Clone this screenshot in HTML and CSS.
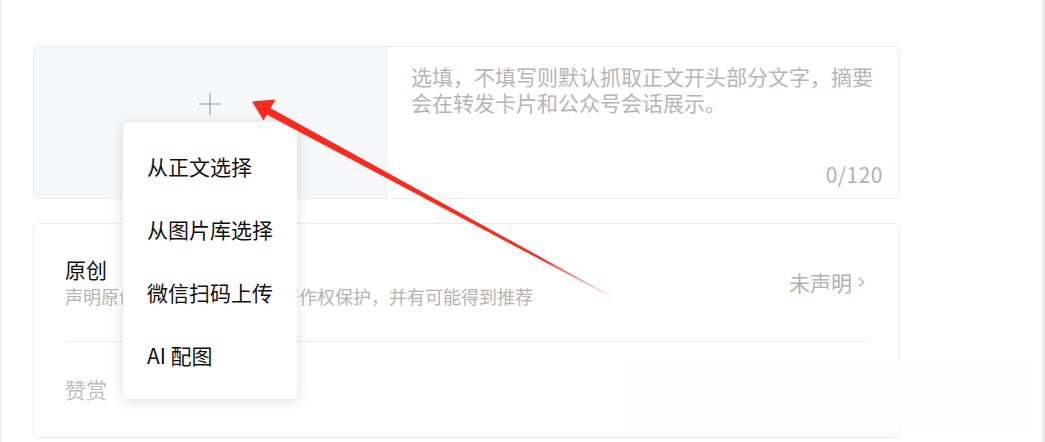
FILE: index.html
```html
<!DOCTYPE html>
<html lang="zh-CN">
<head>
<meta charset="utf-8">
<title>封面与摘要</title>
<link rel="stylesheet" href="styles.css">
</head>
<body>
<div class="page">
  <div class="edge edge-left"></div>
  <main class="content">
    <section class="cover-card">
      <div class="cover-pick">
        <svg class="plus" width="24" height="24" viewBox="0 0 24 24" aria-hidden="true">
          <path d="M12 1 V23 M1 12 H23" stroke="#b4b4b4" stroke-width="1.6" fill="none"/>
        </svg>
      </div>
      <div class="digest">
        <p class="digest-placeholder">选填，不填写则默认抓取正文开头部分文字，摘要会在转发卡片和公众号会话展示。</p>
        <div class="digest-count">0/120</div>
      </div>
    </section>

    <section class="settings-card">
      <div class="setting-row">
        <div class="setting-info">
          <div class="setting-title">原创</div>
          <div class="setting-desc">声明原创获得原创标识，受著作权保护，并有可能得到推荐</div>
        </div>
        <div class="setting-value">未声明
          <svg class="chevron" width="9" height="12" viewBox="0 0 9 12" aria-hidden="true">
            <path d="M2 1.5 L6.5 6 L2 10.5" stroke="#b4b4b4" stroke-width="1.3" fill="none"/>
          </svg>
        </div>
      </div>
      <div class="setting-row setting-row-last">
        <div class="setting-title setting-title-muted">赞赏</div>
      </div>
    </section>
  </main>
  <div class="edge edge-right"></div>

  <ul class="cover-menu">
    <li class="cover-menu-item">从正文选择</li>
    <li class="cover-menu-item">从图片库选择</li>
    <li class="cover-menu-item">微信扫码上传</li>
    <li class="cover-menu-item">AI 配图</li>
  </ul>

  <div class="ghost-panel"></div>

  <svg class="annotation-arrow" width="1045" height="442" viewBox="0 0 1045 442" aria-hidden="true">
    <defs>
      <linearGradient id="tailFade" gradientUnits="userSpaceOnUse" x1="540" y1="258" x2="614" y2="298">
        <stop offset="0" stop-color="#fb2a1c" stop-opacity="1"/>
        <stop offset="1" stop-color="#fb2a1c" stop-opacity="0.05"/>
      </linearGradient>
    </defs>
    <polygon points="266.2,114.2 269.8,107.8 612.3,296.6 611.8,297.5" fill="url(#tailFade)"/>
    <polygon points="252,101.5 275.5,99.5 263.5,120.5" fill="#fb2a1c"/>
  </svg>
</div>
</body>
</html>
```

FILE: styles.css
```css
* {
  box-sizing: border-box;
}

html, body {
  margin: 0;
  padding: 0;
  background: #ffffff;
}

body {
  font-family: "Noto Sans CJK SC", "Liberation Sans", sans-serif;
  color: #1f1f1f;
}

.page {
  position: relative;
  width: 1045px;
  height: 442px;
  overflow: hidden;
  display: flex;
}

.edge {
  flex: none;
  background: #f0f0f0;
}

.edge-left {
  width: 2px;
}

.edge-right {
  width: 3px;
  margin-left: auto;
  background: #ececec;
}

.content {
  flex: none;
  width: 867px;
  margin-left: 31px;
  padding-top: 46px;
}

/* cover + digest card */
.cover-card {
  display: flex;
  height: 153px;
  border: 1px solid #ececec;
  border-radius: 6px;
  overflow: hidden;
}

.cover-pick {
  flex: none;
  width: 353px;
  background: #f6f7f9;
  border-right: 1px solid #efefef;
  display: flex;
  justify-content: center;
  padding-top: 45px;
}

.plus {
  display: block;
}

.digest {
  flex: 1;
  display: flex;
  flex-direction: column;
  padding: 16px 20px 11px 24px;
}

.digest-placeholder {
  margin: 0;
  font-size: 21px;
  line-height: 26px;
  color: #b6b6b6;
}

.digest-count {
  margin-top: auto;
  align-self: flex-end;
  font-size: 21px;
  line-height: 26px;
  color: #b2b2b2;
  margin-right: -4px;
  letter-spacing: 0.5px;
}

/* settings card */
.settings-card {
  margin-top: 24px;
  height: 215px;
  border: 1px solid #ececec;
  border-radius: 6px;
  padding: 0 31px;
}

.setting-row {
  display: flex;
  align-items: center;
  justify-content: space-between;
  padding: 31px 0 32px;
  border-bottom: 1px solid #ededed;
}

.setting-row-last {
  border-bottom: none;
  padding-top: 33px;
}

.setting-title {
  font-size: 21px;
  line-height: 28px;
  color: #111111;
}

.setting-title-muted {
  color: #bdbdbd;
}

.setting-desc {
  font-size: 18px;
  line-height: 26px;
  color: #b4b4b4;
}

.setting-value {
  display: flex;
  align-items: center;
  gap: 5px;
  font-size: 21px;
  line-height: 28px;
  color: #b2b2b2;
  margin-right: 2px;
}

.chevron {
  display: block;
}

/* dropdown menu */
.cover-menu {
  position: absolute;
  left: 123px;
  top: 122px;
  width: 174px;
  margin: 0;
  padding: 12px 0 13px;
  list-style: none;
  background: #ffffff;
  border-radius: 6px;
  box-shadow: 0 2px 14px rgba(0, 0, 0, 0.13);
}

.cover-menu-item {
  height: 63px;
  display: flex;
  align-items: center;
  padding-left: 24px;
  font-size: 21px;
  color: #111111;
  white-space: nowrap;
}

/* faint floating panel lying over the card edge */
.ghost-panel {
  position: absolute;
  left: 632px;
  top: 362px;
  width: 396px;
  height: 67px;
  background: #fefefe;
  box-shadow: 0 0 0 1px #fcfcfc;
}

.annotation-arrow {
  position: absolute;
  left: 0;
  top: 0;
  pointer-events: none;
}
```
